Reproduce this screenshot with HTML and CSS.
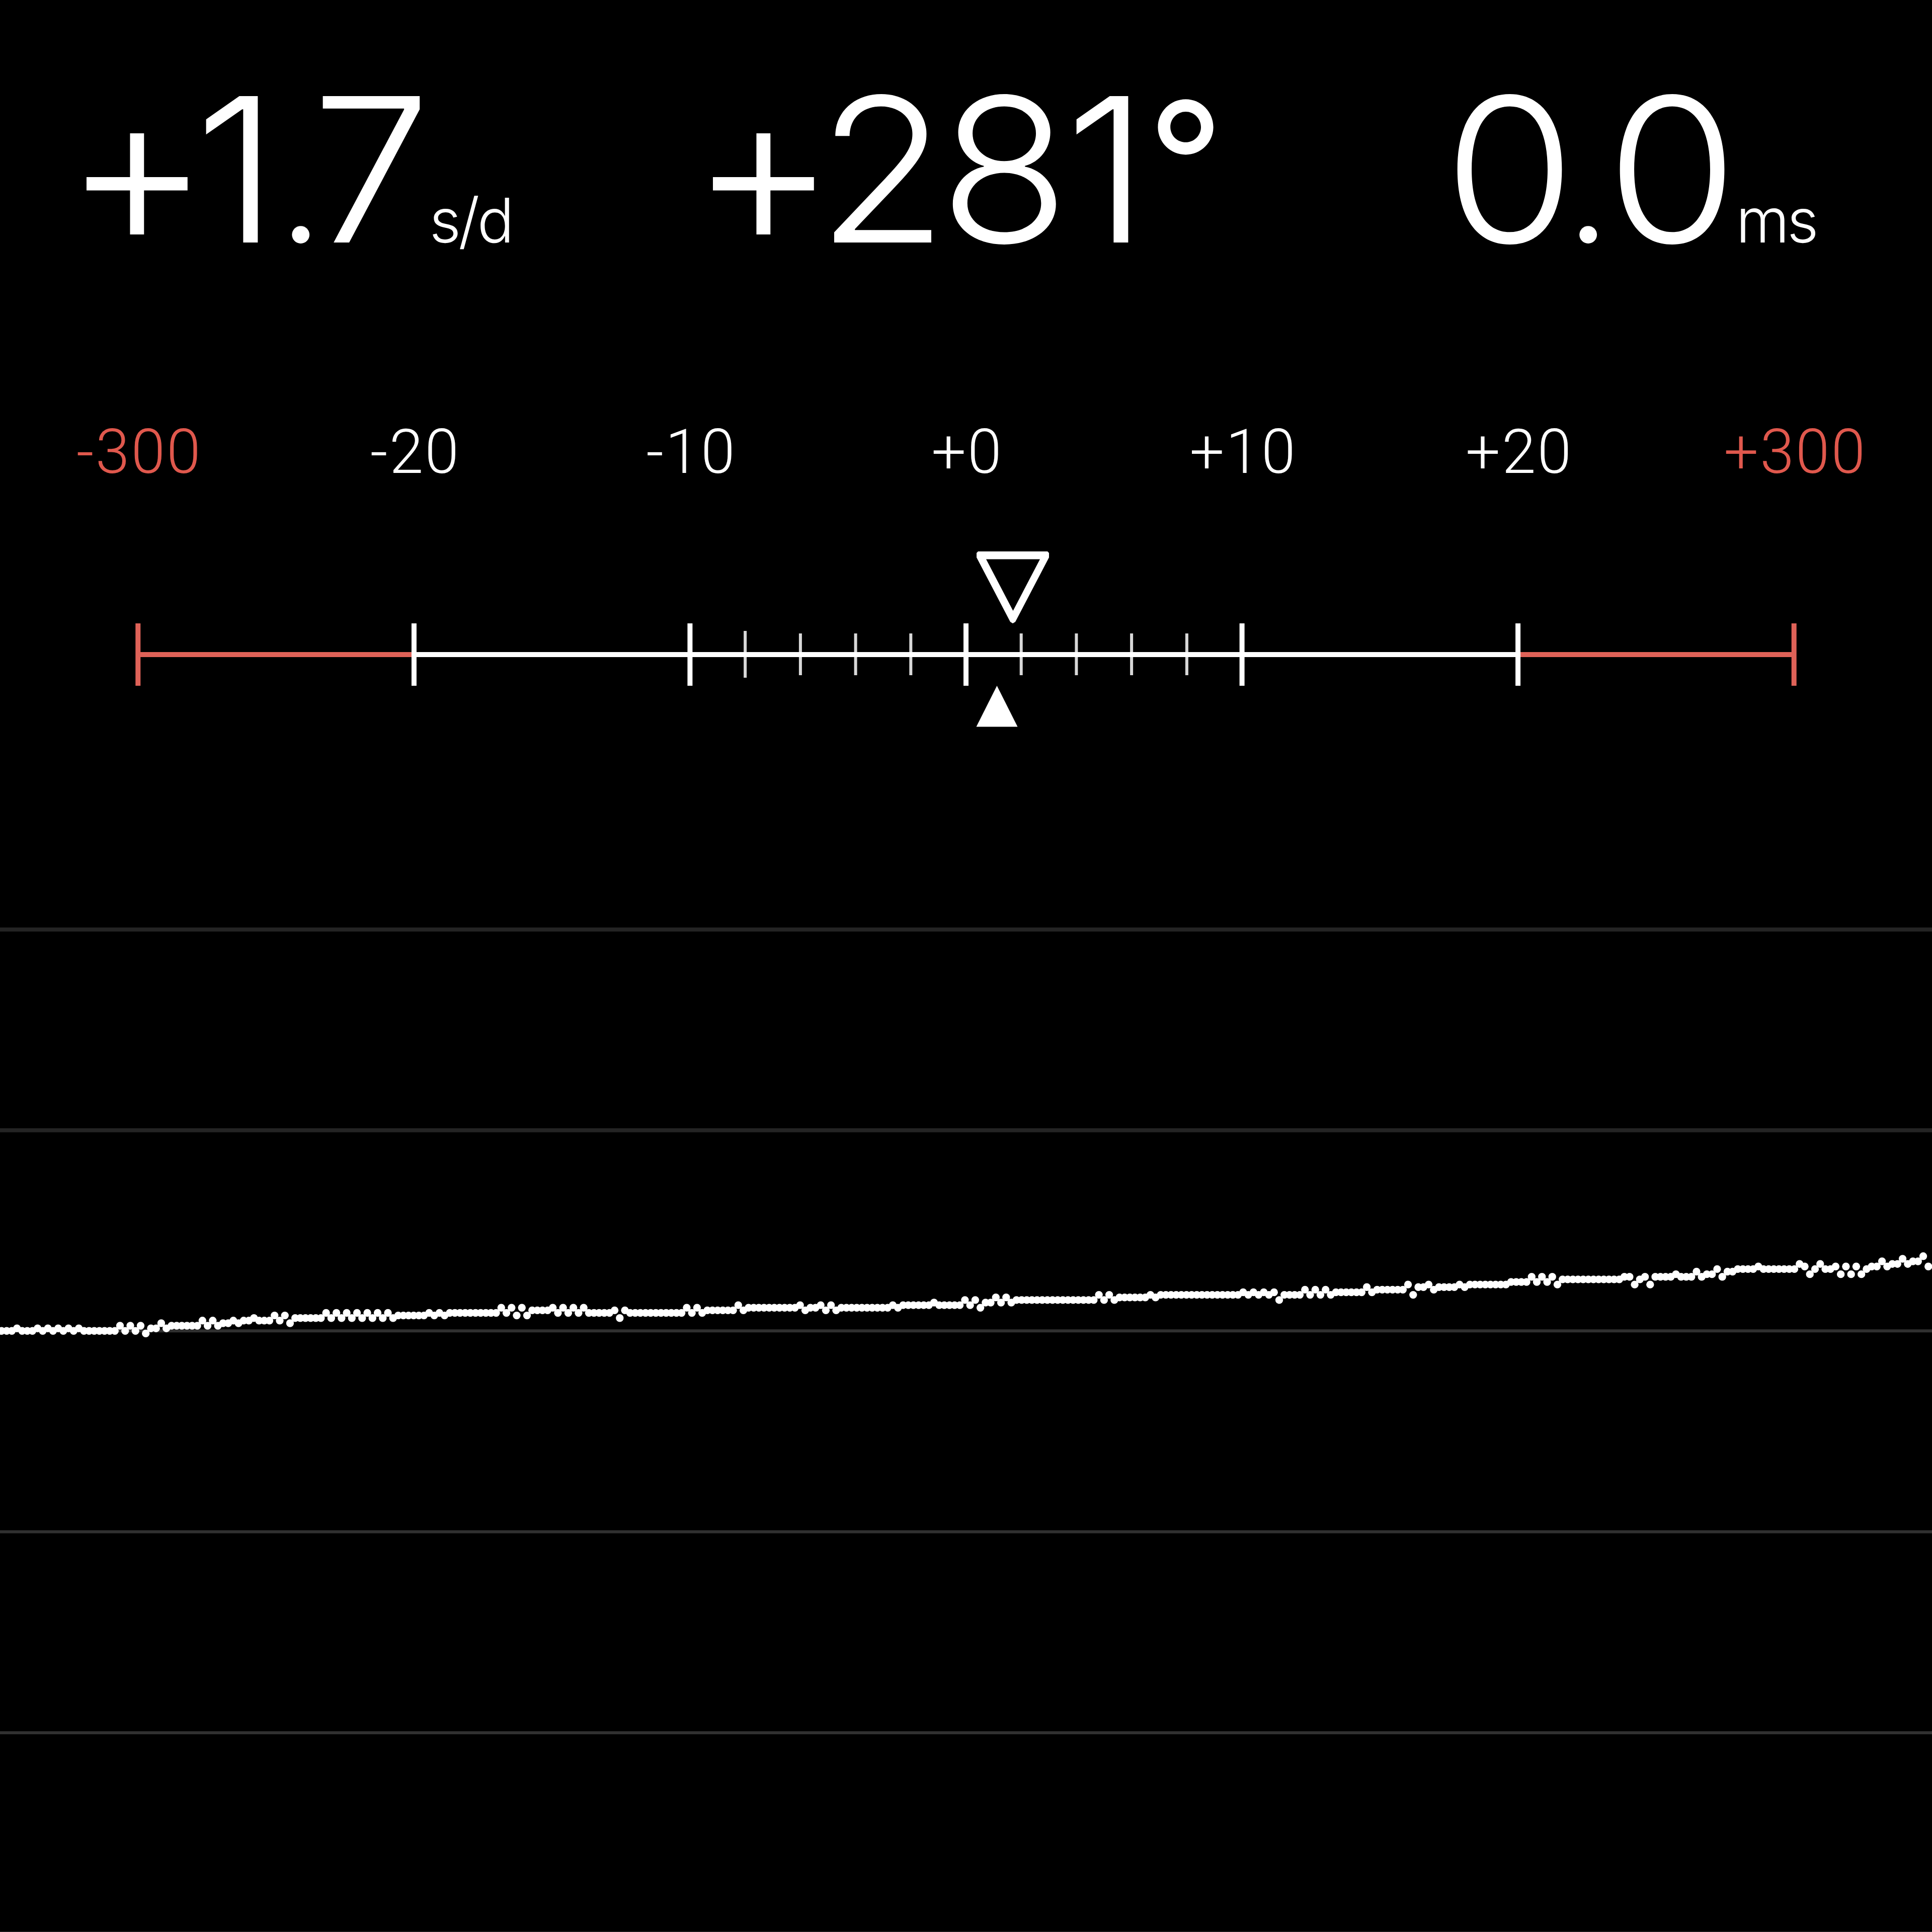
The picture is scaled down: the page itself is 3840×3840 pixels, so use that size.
FILE: index.html
```html
<!DOCTYPE html>
<html lang="en">
<head>
    <meta charset="UTF-8">
    <meta name="viewport" content="width=device-width, initial-scale=1.0">
    <title>Timegrapher</title>
    <link rel="stylesheet" href="styles.css">
</head>
<body>
    <div class="readings">
        <div class="reading rate">
            <span class="value"><span class="plus">+</span><span class="one">1</span><span class="dot">.</span><span class="seven">7</span></span>
            <span class="unit">s/d</span>
        </div>
        <div class="reading amplitude">
            <span class="value"><span class="plus">+</span><span class="two">2</span><span class="eight">8</span><span class="one">1</span><span class="degree">°</span></span>
        </div>
        <div class="reading beat-error">
            <span class="value"><span class="zero">0</span><span class="dot">.</span><span class="zero">0</span></span>
            <span class="unit">ms</span>
        </div>
    </div>

    <div class="scale-labels">
        <span class="limit">-300</span>
        <span>-20</span>
        <span>-10</span>
        <span>+0</span>
        <span>+10</span>
        <span>+20</span>
        <span class="limit">+300</span>
    </div>

    <svg class="gauge" viewBox="0 1080 3840 380">
        <g class="limit-marks">
            <path d="M274.3 1301H823M3017 1301H3565.7"/>
            <path d="M274.3 1239V1363M3565.7 1239V1363"/>
        </g>
        <g class="minor-marks">
            <path d="M1481.1 1254V1347M1590.9 1259V1342M1700.6 1259V1342M1810.3 1259V1342"/>
            <path d="M2029.7 1259V1342M2139.4 1259V1342M2249.1 1259V1342M2358.9 1259V1342"/>
        </g>
        <g class="major-marks">
            <path d="M822.9 1301H3017.1"/>
            <path d="M822.9 1239V1363M1371.4 1239V1363M1920 1239V1363M2468.6 1239V1363M3017.1 1239V1363"/>
        </g>
        <path class="pointer" fill-rule="evenodd" d="M1944 1096H2082L2085 1099V1108L2018 1236L2013 1239L2008 1236L1941 1108V1099ZM1960 1111.5L2013.5 1214L2067 1111.5Z"/>
        <path class="pointer" d="M1981.5 1363L2022.5 1444.5H1940.5Z"/>
    </svg>

    <svg class="trace" id="trace" viewBox="0 1800 3840 2040">
        <path class="grid-line faint" d="M0 1847.5H3840M0 2246.5H3840"/>
        <path class="grid-line" d="M0 2645.3H3840M0 3044.5H3840M0 3444H3840M0 3842H3840"/>
    </svg>

    <script src="trace.js"></script>
</body>
</html>
```
FILE: styles.css
```css
body {
    margin: 0;
    width: 3840px;
    height: 3840px;
    overflow: hidden;
    background: #000;
    color: #fff;
    font-family: Inter, sans-serif;
    font-weight: 300;
}

.readings {
    display: flex;
    height: 800px;
    padding-left: 127px;
    box-sizing: border-box;
    padding-top: 94px;
}

.reading {
    display: flex;
    align-items: baseline;
    height: 484px;
    white-space: nowrap;
}

.rate {
    width: 1245px;
}

.amplitude {
    width: 1505px;
}

.value {
    font-size: 400px;
    line-height: 484px;
}

.value span {
    display: inline-block;
}

.value .one,
.value .two,
.value .seven,
.value .eight,
.value .zero {
    transform: scaleX(1.06);
}

.value .plus {
    font-size: 445px;
    line-height: 0;
    vertical-align: -10px;
}

.value .dot {
    font-size: 330px;
    line-height: 0;
}

.value .degree {
    font-size: 335px;
    font-weight: 400;
    line-height: 0;
    vertical-align: 39px;
    margin-left: 2px;
}

.rate .one {
    margin-left: -27px;
}

.rate .dot {
    margin-left: 3px;
}

.rate .seven {
    margin-left: -18px;
}

.amplitude .two {
    margin-left: -32px;
}

.amplitude .eight {
    margin-left: -2px;
}

.amplitude .one {
    margin-left: 2px;
}

.beat-error .dot {
    margin-left: -14px;
    margin-right: -3px;
}

.unit {
    font-size: 122px;
    letter-spacing: -5px;
    margin-left: 3px;
}

.scale-labels {
    display: grid;
    grid-template-columns: repeat(7, 1fr);
    height: 280px;
    font-family: Roboto, sans-serif;
    font-size: 122px;
    letter-spacing: 3px;
    line-height: 197px;
    text-align: center;
}

.scale-labels span {
    padding-left: 5px;
}

.limit {
    color: #e0584d;
}

.gauge {
    display: block;
    width: 3840px;
    height: 380px;
}

.gauge path {
    stroke-width: 10;
}

.limit-marks {
    stroke: #df6258;
}

.major-marks {
    stroke: #fff;
}

.minor-marks path {
    stroke: #d8d8d8;
    stroke-width: 6;
}

.pointer {
    fill: #fff;
}

.trace {
    display: block;
    width: 3840px;
    height: 2040px;
    margin-top: 340px;
}

.grid-line {
    stroke: #303030;
    stroke-width: 6;
}

.faint {
    stroke: #242424;
    stroke-width: 8;
}

.beat {
    fill: #fff;
}
```
FILE: trace.js
```js
const STEP_X = 10.24;
const STEP_Y = 5.12;
const ZERO_Y = 2645.3;

// [level, how many beats in a row]
const beats = [
    [0, 3], [1, 1], [0, 3], [1, 1], [0, 1], [1, 1], [0, 1], [1, 1], [0, 1], [1, 1], [0, 1], [1, 1],
    [0, 7], [2, 1], [0, 1], [2, 1], [0, 1], [2, 1], [-1, 1], [1, 2], [3, 1], [1, 1], [2, 6],
    [4, 1], [2, 1], [4, 1], [2, 1], [3, 2], [4, 1], [3, 1], [4, 2], [5, 1], [4, 3],
    [6, 1], [4, 1], [6, 1], [3, 1], [5, 6],
    [7, 1], [5, 1], [7, 1], [5, 1], [7, 1], [5, 1], [7, 1], [5, 1], [7, 1], [5, 1], [7, 1], [5, 1], [7, 1], [5, 1],
    [6, 6], [7, 1], [6, 1], [7, 1], [6, 1], [7, 10],
    [9, 1], [7, 1], [9, 1], [6, 1], [9, 1], [6, 1], [8, 4], [9, 1], [7, 1], [9, 1], [7, 1], [9, 1], [7, 1], [9, 1],
    [7, 5], [8, 1], [5, 1], [8, 1], [7, 11], [9, 1], [7, 1], [9, 1], [7, 1], [8, 6], [10, 1], [8, 1], [9, 10],
    [10, 1], [8, 1], [9, 2], [10, 1], [8, 1], [10, 1], [8, 1], [9, 10], [10, 1], [9, 1], [10, 6], [11, 1], [10, 5],
    [12, 1], [10, 1], [12, 1], [9, 1], [11, 2], [13, 1], [11, 1], [13, 1], [11, 1], [12, 16],
    [14, 1], [12, 1], [14, 1], [12, 1], [13, 6], [14, 1], [13, 1], [14, 16],
    [15, 1], [14, 1], [15, 1], [14, 1], [15, 1], [14, 1], [15, 1], [12, 1], [14, 4],
    [16, 1], [14, 1], [16, 1], [14, 1], [16, 1], [14, 1], [15, 6], [17, 1], [15, 1], [16, 6],
    [18, 1], [14, 1], [17, 2], [18, 1], [16, 1], [17, 4], [18, 1], [17, 1], [18, 8], [19, 4],
    [21, 1], [19, 1], [21, 1], [19, 1], [21, 1], [18, 1], [20, 12], [21, 2], [18, 1], [20, 1], [21, 1], [18, 1],
    [21, 4], [22, 1], [21, 3], [23, 1], [21, 1], [22, 2], [24, 1], [21, 1], [23, 2], [24, 4], [25, 1], [24, 7],
    [26, 1], [25, 1], [22, 1], [24, 1], [26, 1], [24, 2], [25, 1], [22, 1], [25, 1], [22, 1], [25, 1], [22, 1],
    [24, 1], [25, 2], [27, 1], [25, 1], [26, 2], [28, 1], [26, 1], [27, 2], [29, 1], [25, 1]
];

const trace = document.getElementById("trace");
let i = 0;

beats.forEach(([level, count]) => {
    for (let n = 0; n < count; n++) {
        const dot = document.createElementNS("http://www.w3.org/2000/svg", "circle");
        dot.setAttribute("class", "beat");
        dot.setAttribute("cx", 3 + i * STEP_X);
        dot.setAttribute("cy", ZERO_Y - level * STEP_Y);
        dot.setAttribute("r", 7.7);
        trace.appendChild(dot);
        i++;
    }
});
```
